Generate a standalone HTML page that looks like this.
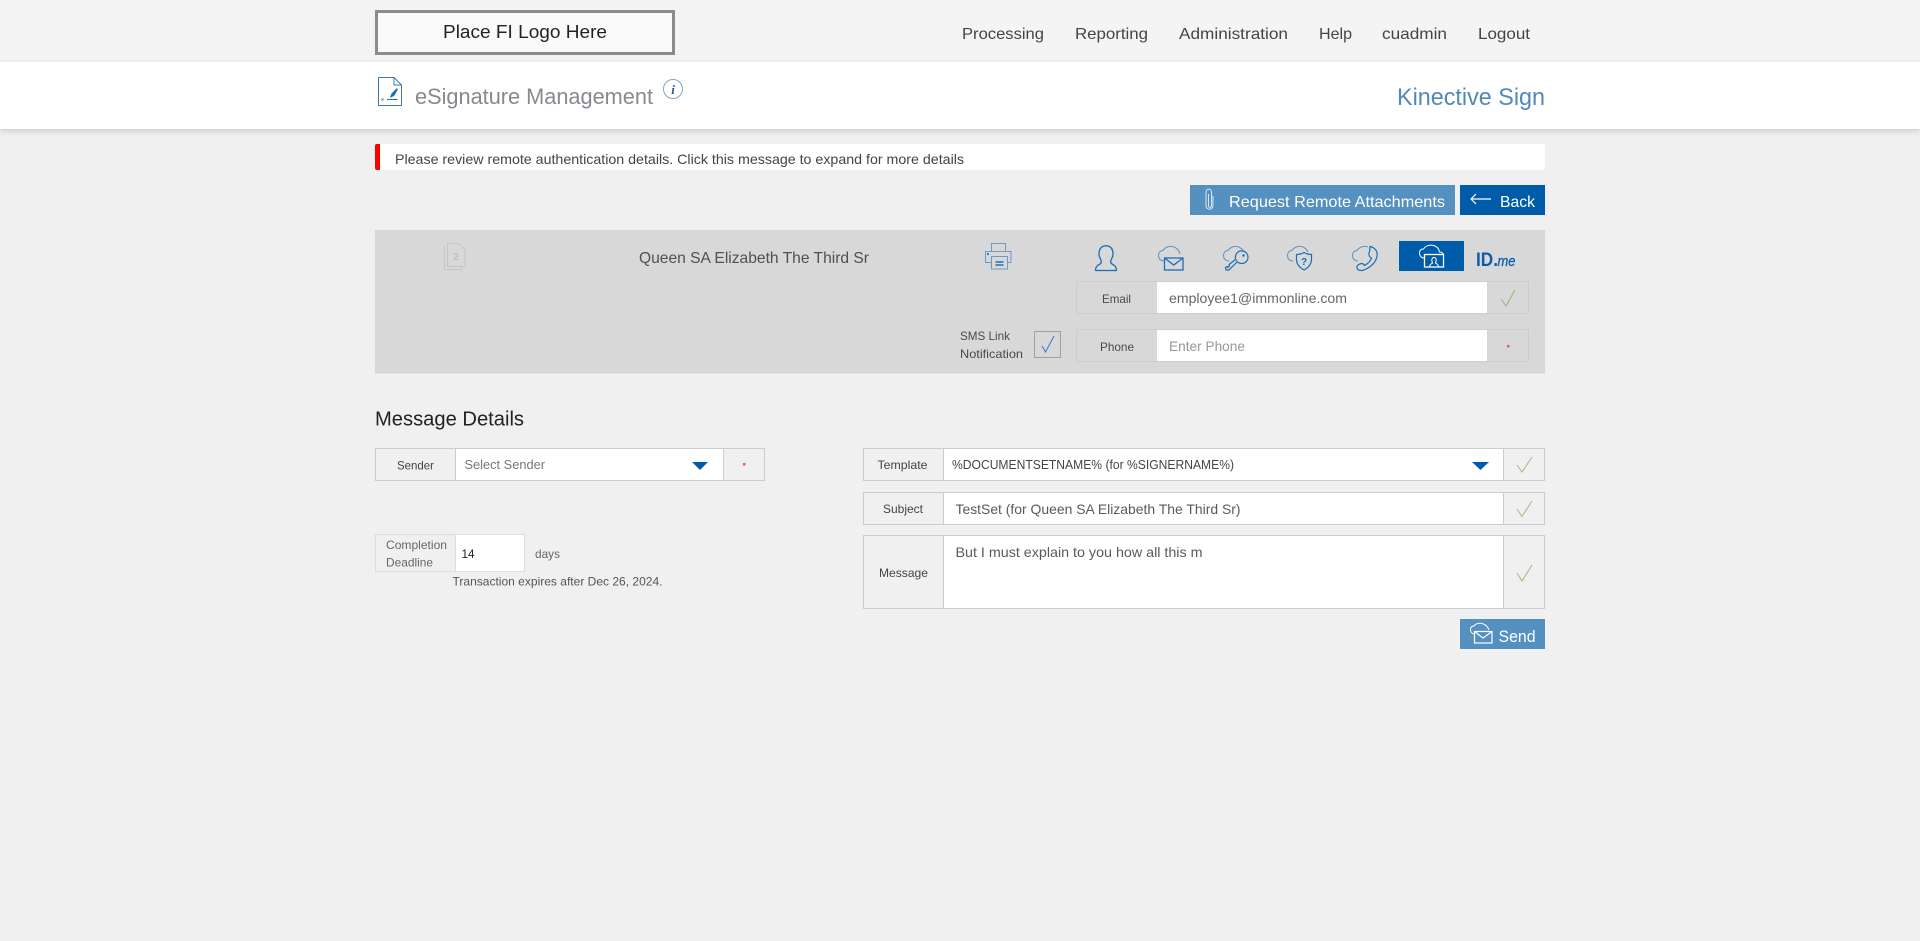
<!DOCTYPE html>
<html lang="en">
<head>
<meta charset="utf-8">
<title>eSignature Management</title>
<style>
html,body{margin:0;padding:0;width:1920px;height:941px;overflow:hidden;background:#f0f0f0;font-family:"Liberation Sans",sans-serif}
.b{position:absolute;box-sizing:border-box}
svg{position:absolute;left:0;top:0}
text{font-family:"Liberation Sans",sans-serif}
</style>
</head>
<body>
<div class="b" style="left:0;top:0;width:1920px;height:62px;background:#f4f4f4"></div>
<div class="b" style="left:0;top:62px;width:1920px;height:67px;background:#fff;box-shadow:0 2px 6px rgba(0,0,0,.16)"></div>
<div class="b" style="left:375px;top:10px;width:300px;height:45px;background:#fafafa;border:3px solid #8c8c8c"></div>
<div class="b" style="left:375px;top:144px;width:1170px;height:26px;background:#fff;border-left:5px solid #f00;border-radius:2px"></div>
<div class="b" style="left:1190px;top:185px;width:265px;height:30px;background:#5490c0"></div>
<div class="b" style="left:1460px;top:185px;width:85px;height:30px;background:#005ca8"></div>
<div class="b" style="left:375px;top:230px;width:1170px;height:144px;background:#d8d8d8;border-bottom:1px solid #e2e2e2"></div>
<div class="b" style="left:1399px;top:241px;width:65px;height:30px;background:#005ca8"></div>
<!-- email / phone -->
<div class="b" style="left:1076px;top:281px;width:453px;height:33px;border:1px solid #cdcdcd"></div>
<div class="b" style="left:1157px;top:282px;width:330px;height:31px;background:#fff"></div>
<div class="b" style="left:1076px;top:329px;width:453px;height:33px;border:1px solid #cdcdcd"></div>
<div class="b" style="left:1157px;top:330px;width:330px;height:31px;background:#fff"></div>
<div class="b" style="left:1034px;top:331px;width:27px;height:27px;border:1px solid #a0a0a0"></div>
<!-- sender -->
<div class="b" style="left:375px;top:448px;width:390px;height:33px;border:1px solid #ccc"></div>
<div class="b" style="left:455px;top:449px;width:269px;height:31px;background:#fff;border-left:1px solid #ccc;border-right:1px solid #ccc"></div>
<!-- completion -->
<div class="b" style="left:375px;top:534px;width:150px;height:38px;border:1px solid #ddd"></div>
<div class="b" style="left:455px;top:535px;width:69px;height:36px;background:#fff;border-left:1px solid #ddd"></div>
<!-- template -->
<div class="b" style="left:863px;top:448px;width:682px;height:33px;border:1px solid #ccc"></div>
<div class="b" style="left:943px;top:449px;width:561px;height:31px;background:#fff;border-left:1px solid #ccc;border-right:1px solid #ccc"></div>
<div class="b" style="left:863px;top:492px;width:682px;height:33px;border:1px solid #ccc"></div>
<div class="b" style="left:943px;top:493px;width:561px;height:31px;background:#fff;border-left:1px solid #ccc;border-right:1px solid #ccc"></div>
<div class="b" style="left:863px;top:535px;width:682px;height:74px;border:1px solid #ccc"></div>
<div class="b" style="left:943px;top:536px;width:561px;height:72px;background:#fff;border-left:1px solid #ccc;border-right:1px solid #ccc"></div>
<div class="b" style="left:1460px;top:619px;width:85px;height:30px;background:#5490c0"></div>

<svg width="1920" height="941" viewBox="0 0 1920 941" xmlns="http://www.w3.org/2000/svg">
<text x="443" y="38" font-size="18" fill="#222" textLength="164" lengthAdjust="spacingAndGlyphs">Place FI Logo Here</text>
<g font-size="16" fill="#444">
<text x="962" y="39" textLength="82" lengthAdjust="spacingAndGlyphs">Processing</text>
<text x="1075" y="39" textLength="73" lengthAdjust="spacingAndGlyphs">Reporting</text>
<text x="1179" y="39" textLength="109" lengthAdjust="spacingAndGlyphs">Administration</text>
<text x="1319" y="39" textLength="33" lengthAdjust="spacingAndGlyphs">Help</text>
<text x="1382" y="39" textLength="65" lengthAdjust="spacingAndGlyphs">cuadmin</text>
<text x="1478" y="39" textLength="52" lengthAdjust="spacingAndGlyphs">Logout</text>
</g>
<text x="415" y="104" font-size="22" fill="#858a90" textLength="238" lengthAdjust="spacingAndGlyphs">eSignature Management</text>
<text x="1397" y="105" font-size="24" fill="#5288bb" textLength="148" lengthAdjust="spacingAndGlyphs">Kinective Sign</text>
<text x="395" y="164" font-size="14" fill="#444" textLength="569" lengthAdjust="spacingAndGlyphs">Please review remote authentication details. Click this message to expand for more details</text>
<text x="1229" y="207" font-size="16" fill="#fff" textLength="216" lengthAdjust="spacingAndGlyphs">Request Remote Attachments</text>
<text x="1500" y="207" font-size="16" fill="#fff" textLength="35" lengthAdjust="spacingAndGlyphs">Back</text>
<text x="639" y="263" font-size="16" fill="#505050" textLength="230" lengthAdjust="spacingAndGlyphs">Queen SA Elizabeth The Third Sr</text>
<text x="960" y="340" font-size="12" fill="#4a4a4a" textLength="50" lengthAdjust="spacingAndGlyphs">SMS Link</text>
<text x="960" y="358" font-size="12" fill="#4a4a4a" textLength="63" lengthAdjust="spacingAndGlyphs">Notification</text>
<text x="1102" y="303" font-size="12" fill="#4a4a4a" textLength="29" lengthAdjust="spacingAndGlyphs">Email</text>
<text x="1100" y="351" font-size="12" fill="#4a4a4a" textLength="34" lengthAdjust="spacingAndGlyphs">Phone</text>
<text x="1169" y="303" font-size="14" fill="#666" textLength="178" lengthAdjust="spacingAndGlyphs">employee1@immonline.com</text>
<text x="1169" y="351" font-size="14" fill="#999" textLength="76" lengthAdjust="spacingAndGlyphs">Enter Phone</text>
<text x="375" y="425.500" font-size="20" fill="#222" textLength="149" lengthAdjust="spacingAndGlyphs">Message Details</text>
<text x="397" y="469.500" font-size="12" fill="#444" textLength="37" lengthAdjust="spacingAndGlyphs">Sender</text>
<text x="464.500" y="469" font-size="13" fill="#777" textLength="80.500" lengthAdjust="spacingAndGlyphs">Select Sender</text>
<text x="386" y="549" font-size="12" fill="#666" textLength="61" lengthAdjust="spacingAndGlyphs">Completion</text>
<text x="386" y="566.500" font-size="12" fill="#666" textLength="47" lengthAdjust="spacingAndGlyphs">Deadline</text>
<text x="461.500" y="558" font-size="12" fill="#222" textLength="13" lengthAdjust="spacingAndGlyphs">14</text>
<text x="535" y="558" font-size="12" fill="#666" textLength="25" lengthAdjust="spacingAndGlyphs">days</text>
<text x="452.500" y="585.500" font-size="12" fill="#555" textLength="210" lengthAdjust="spacingAndGlyphs">Transaction expires after Dec 26, 2024.</text>
<text x="877.500" y="469" font-size="12" fill="#444" textLength="50" lengthAdjust="spacingAndGlyphs">Template</text>
<text x="883" y="513" font-size="12" fill="#444" textLength="40" lengthAdjust="spacingAndGlyphs">Subject</text>
<text x="879" y="577" font-size="12" fill="#444" textLength="49" lengthAdjust="spacingAndGlyphs">Message</text>
<text x="952" y="469" font-size="13" fill="#444" textLength="282" lengthAdjust="spacingAndGlyphs">%DOCUMENTSETNAME% (for %SIGNERNAME%)</text>
<text x="955.500" y="514" font-size="14" fill="#5a5a5a" textLength="285" lengthAdjust="spacingAndGlyphs">TestSet (for Queen SA Elizabeth The Third Sr)</text>
<text x="955.500" y="557" font-size="14" fill="#5a5a5a" textLength="247" lengthAdjust="spacingAndGlyphs">But I must explain to you how all this m</text>
<text x="1498.500" y="642" font-size="17" fill="#fff" textLength="37" lengthAdjust="spacingAndGlyphs">Send</text>

<!-- doc icon -->
<g fill="none" stroke="#3d78b4" stroke-width="1">
<path d="M378.500 77.500H394L401.500 85V105.500H378.500Z"/><path d="M394 77.500V85H401.500"/>
</g>
<path d="M390 97.500L391.500 93.500L396.500 88.500C397.500 88 398 89 397.500 90L394.500 95.500L391 97.500Z" fill="#1b6db5"/>
<path d="M387 99.500H397.500" stroke="#1b6db5" stroke-width="1"/>
<path d="M381.500 98.500L383.500 100.500M383.500 98.500L381.500 100.500" stroke="#666" stroke-width=".7"/>
<!-- info icon -->
<circle cx="673" cy="89" r="9.500" fill="#fff" stroke="#7da7cc" stroke-width="1"/>
<text x="673" y="94" font-size="13" font-weight="bold" font-style="italic" text-anchor="middle" fill="#1b5f9e" style="font-family:'Liberation Serif',serif">i</text>
<!-- paperclip -->
<path d="M1208.500 194V205.500C1208.500 208 1211.500 208 1211.500 205.500V192.500C1211.500 188 1206 188 1206 192.500V205.500C1206 210.500 1213 210.500 1213 205.500V196" fill="none" stroke="#e8f1f8" stroke-width=".9"/>
<!-- back arrow -->
<path d="M1491 199H1471M1476 194L1471 199L1476 204" fill="none" stroke="#fff" stroke-width="1.200"/>
<!-- pages icon -->
<g fill="none" stroke="#c6c6c6" stroke-width="1">
<path d="M447.500 243.500H459L465 249.500V266.500H447.500Z"/><path d="M444.500 246.500V269.500H461.500V266.500"/>
</g>
<text x="456" y="260" font-size="10" font-weight="bold" text-anchor="middle" fill="#bfbfbf">2</text>
<!-- printer -->
<g fill="none" stroke="#6a9bc6" stroke-width="1">
<path d="M991.500 251V243.500H1005.500V251"/>
<path d="M991 262.500H985.500V251.500H1011V262.500H1008"/>
<rect x="991.500" y="256.500" width="16" height="12.500" fill="#d8d8d8"/>
</g>
<path d="M995.500 262H1003.500M995.500 265H1003.500" stroke="#005ca8" stroke-width="1.200"/>
<rect x="987" y="253" width="2" height="2" fill="#3b7fbc"/>

<!-- person -->
<path d="M1100.500 259C1098 255 1098 246 1106 245.700C1114 246 1114 255 1111.500 259C1110.500 261 1110.500 263 1112 264C1115 265.500 1116.500 267 1116.500 270.500H1095.500C1095.500 267 1097 265.500 1100 264C1101.500 263 1101.500 261 1100.500 259Z" fill="none" stroke="#1b6db5" stroke-width="1.300" stroke-linejoin="round"/>
<!-- cloud envelope -->
<path d="M1164 261C1160.500 261 1158.500 258.500 1158.500 255.500C1158.500 252.500 1160.500 250.500 1163 250.500C1165 247 1170 245.500 1174 247C1177 248 1179.500 251 1180 254" fill="none" stroke="#5a94c6" stroke-width="1"/>
<rect x="1164.500" y="258" width="18.500" height="12" fill="#d8d8d8" stroke="#1b6db5" stroke-width="1.300"/>
<path d="M1164.500 258L1173.700 265L1183 258" fill="none" stroke="#1b6db5" stroke-width="1.300"/>
<!-- cloud key -->
<path d="M1229 261C1225.500 261 1223.500 258.500 1223.500 255.500C1223.500 252.500 1225.500 250.500 1228 250.500C1230 247 1235 245.500 1239 247C1241 248 1242.500 249.500 1243.500 251" fill="none" stroke="#5a94c6" stroke-width="1"/>
<circle cx="1241.700" cy="257.200" r="6.300" fill="#d8d8d8" stroke="#1b6db5" stroke-width="1.200"/>
<circle cx="1243.500" cy="255.500" r="1.200" fill="#1b6db5"/>
<path d="M1237 262L1229 270H1226L1225.500 267.500L1227 266.500L1228 267.500L1229.500 266L1229 264.500L1235.500 259.500" fill="#d8d8d8" stroke="#1b6db5" stroke-width="1.200"/>
<!-- cloud shield -->
<path d="M1293 261C1289.500 261 1287.500 258.500 1287.500 255.500C1287.500 252.500 1289.500 250.500 1292 250.500C1294 247 1299 245.500 1303 247C1305.500 248 1307 250 1308 252" fill="none" stroke="#5a94c6" stroke-width="1"/>
<path d="M1304 252.500C1306.500 254 1309 254.500 1311.500 254.500V259.500C1311.500 264 1308.500 267.500 1304 270C1299.500 267.500 1296.500 264 1296.500 259.500V254.500C1299 254.500 1301.500 254 1304 252.500Z" fill="#d8d8d8" stroke="#1b6db5" stroke-width="1.200"/>
<text x="1304" y="265" font-size="10" font-weight="bold" text-anchor="middle" fill="#1b6db5">?</text>
<!-- cloud phone -->
<path d="M1358 261C1354.500 261 1352.500 258.500 1352.500 255.500C1352.500 252.500 1354.500 250.500 1357 250.500C1359 247 1364 245.500 1368 247" fill="none" stroke="#5a94c6" stroke-width="1"/>
<path d="M1370 246.500C1375 247.500 1378 251.500 1377 256C1376 262 1371 267 1364 270C1361 271 1357.500 270.500 1357 268C1356.500 265.500 1359 264 1361.500 263.500C1363 263.500 1364 264.500 1364.500 265.500C1367.500 264 1370.500 261 1371.500 258C1369.500 257 1368.500 255 1369 253C1370 251 1370 248.500 1370 246.500Z" fill="none" stroke="#1b6db5" stroke-width="1.200"/>
<!-- active cloud person -->
<path d="M1424 258C1421 258 1419.500 255.500 1419.500 253C1419.500 250.500 1421 249 1423.500 249C1425.500 245.500 1431 244 1435 246C1437.500 247 1439 249.500 1439.500 252C1441.500 252 1443 253 1443.500 255" fill="none" stroke="#fff" stroke-width="1"/>
<rect x="1424.500" y="254.500" width="19" height="12.500" fill="#005ca8" stroke="#fff" stroke-width="1.300"/>
<path d="M1429.500 267C1429.500 264 1431.500 264 1432.500 263C1431.500 261 1431.300 257.500 1434 257.500C1436.700 257.500 1436.500 261 1435.500 263C1436.500 264 1438.500 264 1438.500 267" fill="none" stroke="#fff" stroke-width="1"/>
<!-- ID.me -->
<text x="1476" y="266" font-size="19" font-weight="bold" fill="#0a5ea8" textLength="22" lengthAdjust="spacingAndGlyphs">ID.</text>
<text x="1497.500" y="266" font-size="15" font-style="italic" fill="#0a5ea8" stroke="#0a5ea8" stroke-width=".3" textLength="18" lengthAdjust="spacingAndGlyphs">me</text>

<!-- checks -->
<g fill="none" stroke-width="1">
<path d="M1501 299L1506 306L1515 290" stroke="#8fbb6a"/>
<path d="M1042 346L1045.500 352L1054 336" stroke="#2f7dc0"/>
<path d="M1517 465L1522 472L1532 457" stroke="#a3b680"/>
<path d="M1517 509L1522 516.500L1532 501" stroke="#a3b680"/>
<path d="M1517 573L1522 581L1532 565" stroke="#a3b680"/>
</g>
<!-- red dots -->
<rect x="1507" y="345" width="2.500" height="2.500" fill="#e0606a"/>
<rect x="743" y="463" width="2.500" height="2.500" fill="#e0606a"/>
<!-- arrows -->
<path d="M692 462H708L700 470Z" fill="#005ca8"/>
<path d="M1472 462H1489L1480.500 470Z" fill="#005ca8"/>
<!-- send icon -->
<path d="M1475 634C1472 634 1470.500 632 1470.500 629.500C1470.500 627 1472 626 1474 626C1476 623 1481 622.500 1484.500 624.500C1486.500 625.500 1488 627.500 1489 630" fill="none" stroke="#fff" stroke-width="1"/>
<rect x="1474.500" y="631.500" width="17.500" height="11.500" fill="#5490c0" stroke="#fff" stroke-width="1.200"/>
<path d="M1474.500 631.500L1483 638L1492 631.500" fill="none" stroke="#fff" stroke-width="1.200"/>
</svg>
</body>
</html>
